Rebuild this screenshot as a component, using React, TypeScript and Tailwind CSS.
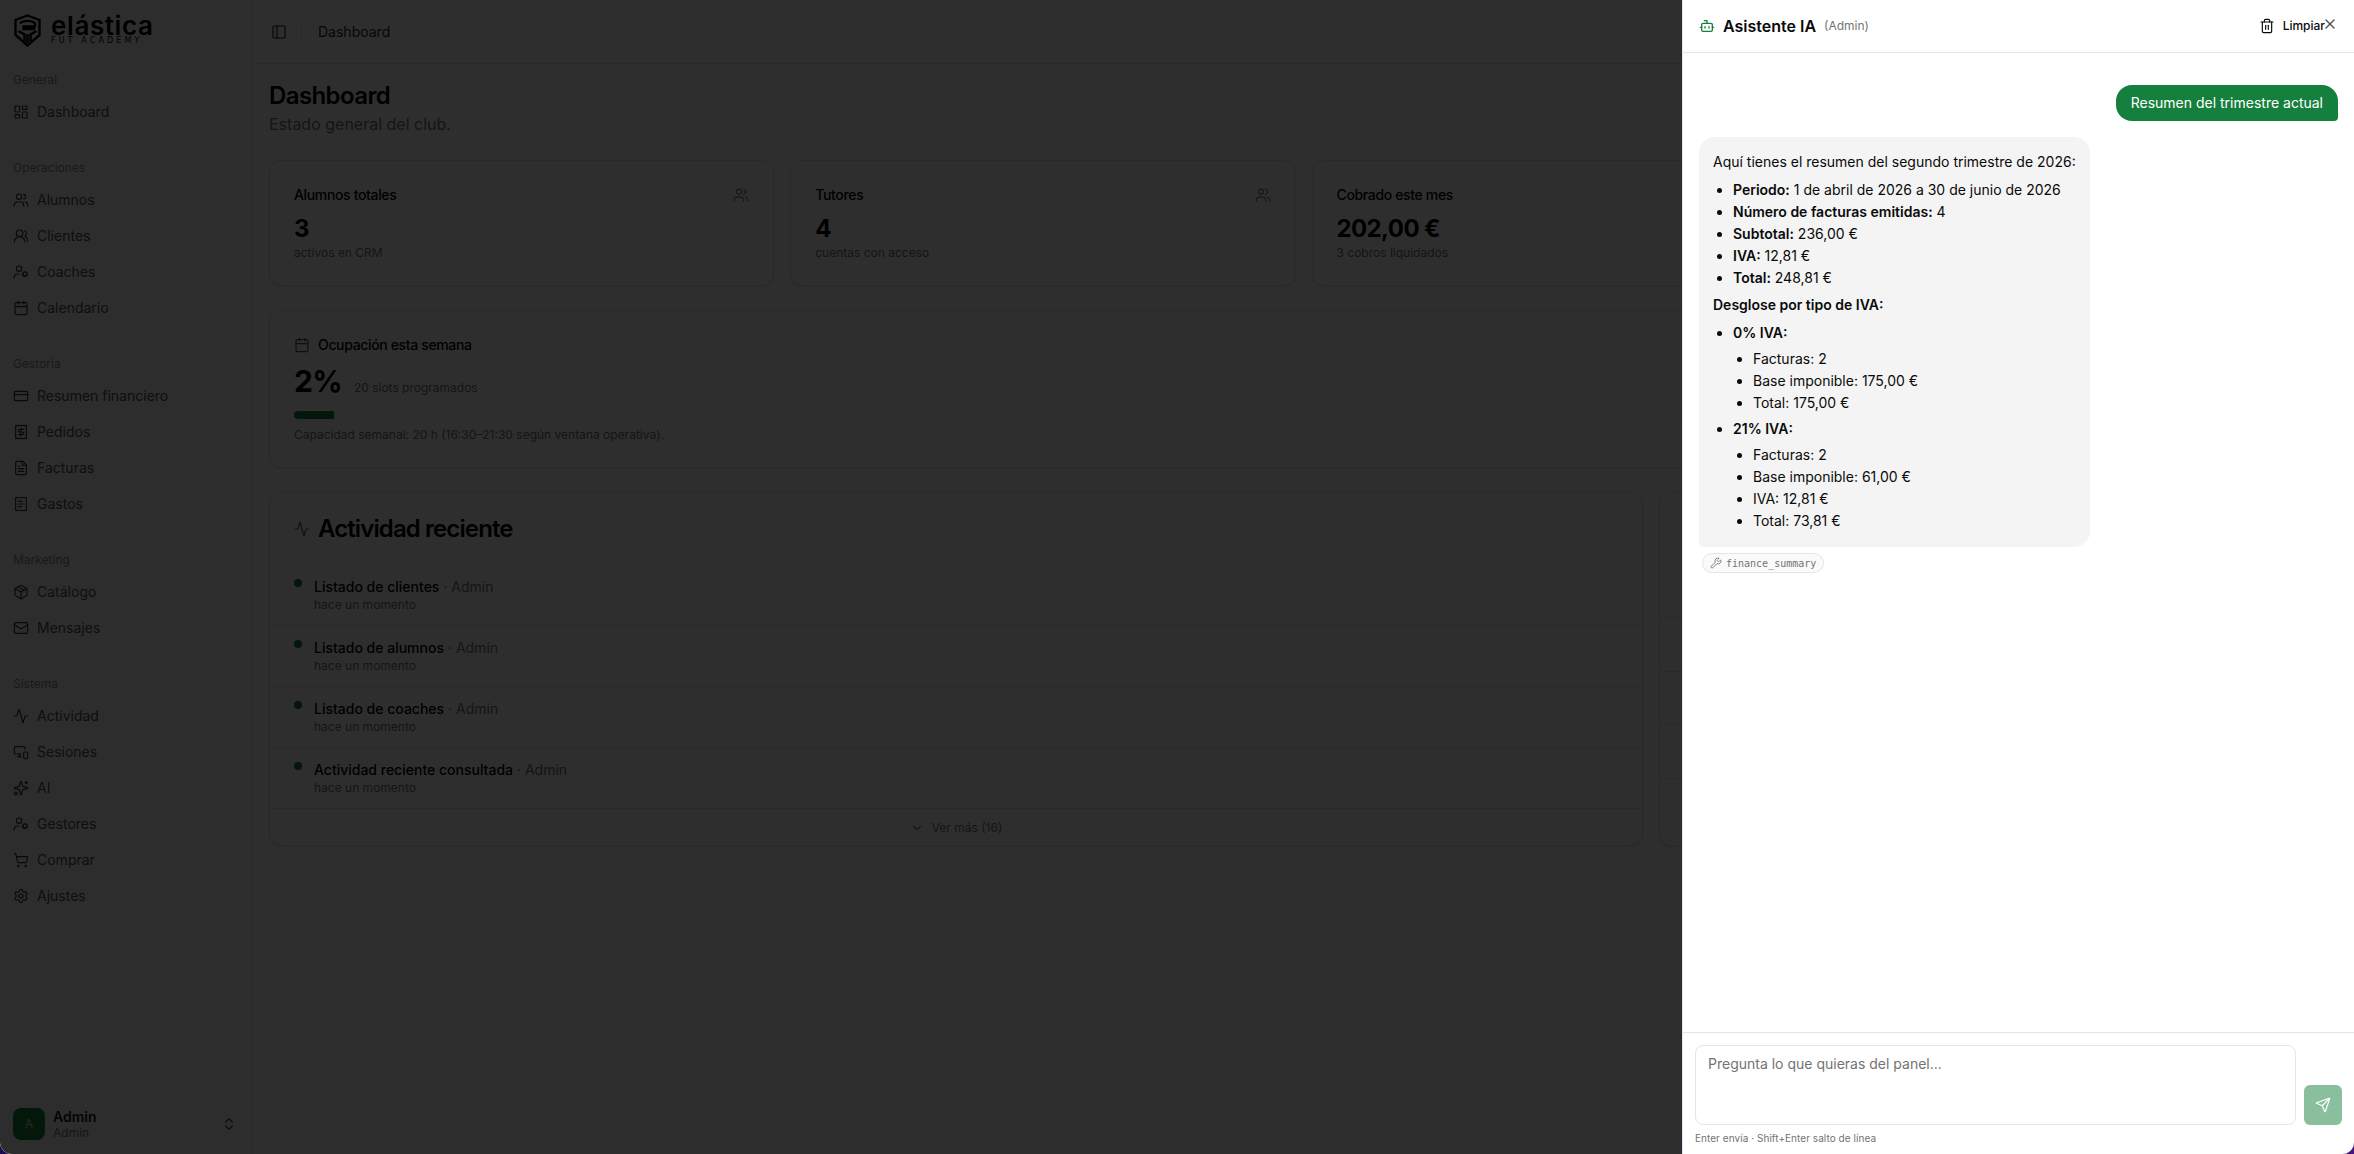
import {
  Activity,
  Bot,
  Calendar,
  ChevronDown,
  ChevronsUpDown,
  CreditCard,
  FileText,
  LayoutDashboard,
  Mail,
  MonitorSmartphone,
  Package,
  PanelLeft,
  Receipt,
  ReceiptText,
  Send,
  Settings,
  ShoppingCart,
  Sparkles,
  Trash2,
  UserCog,
  Users,
  UsersRound,
  Wrench,
  X,
} from 'lucide-react';

const navGroups = [
  { label: 'General', items: [{ name: 'Dashboard', icon: LayoutDashboard }] },
  {
    label: 'Operaciones',
    items: [
      { name: 'Alumnos', icon: Users },
      { name: 'Clientes', icon: UsersRound },
      { name: 'Coaches', icon: UserCog },
      { name: 'Calendario', icon: Calendar },
    ],
  },
  {
    label: 'Gestoría',
    items: [
      { name: 'Resumen financiero', icon: CreditCard },
      { name: 'Pedidos', icon: Receipt },
      { name: 'Facturas', icon: FileText },
      { name: 'Gastos', icon: ReceiptText },
    ],
  },
  {
    label: 'Marketing',
    items: [
      { name: 'Catálogo', icon: Package },
      { name: 'Mensajes', icon: Mail },
    ],
  },
  {
    label: 'Sistema',
    items: [
      { name: 'Actividad', icon: Activity },
      { name: 'Sesiones', icon: MonitorSmartphone },
      { name: 'AI', icon: Sparkles },
      { name: 'Gestores', icon: UserCog },
      { name: 'Comprar', icon: ShoppingCart },
      { name: 'Ajustes', icon: Settings },
    ],
  },
];

const stats = [
  { title: 'Alumnos totales', value: '3', note: 'activos en CRM', icon: true },
  { title: 'Tutores', value: '4', note: 'cuentas con acceso', icon: true },
  { title: 'Cobrado este mes', value: '202,00 €', note: '3 cobros liquidados', icon: true },
  { title: 'Pendiente', value: '', note: '', icon: false },
];

const activity = ['Listado de clientes', 'Listado de alumnos', 'Listado de coaches', 'Actividad reciente consultada'];

const Logo = () => (
  <div className="flex items-center gap-[10px]">
    <svg width="27" height="33" viewBox="0 0 27 33" fill="none" stroke="#000" strokeWidth="2.4">
      <path d="M13.5 1.5 25.5 6v15L13.5 31.5 1.5 21V6z" />
      <path d="M6 9.5c3-3.500 12-3.500 15 0v3H9.500v2.500H21" />
      <path d="M4.500 17l6 3.500v7M22.500 17l-6 3.500v7M13.500 20v9" />
    </svg>
    <div className="flex w-[102px] flex-col">
      <span className="text-[26px] leading-[22px] font-semibold tracking-[0.6px] text-black">elástica</span>
      <span className="font-['DejaVu_Sans',sans-serif] text-[8px] leading-[8px] tracking-[3.1px] whitespace-nowrap text-black">FUT ACADEMY</span>
    </div>
  </div>
);

const Sidebar = () => (
  <aside className="flex h-full w-[253px] shrink-0 flex-col border-r border-[#e5e5e5] bg-[#fafafa]">
    <div className="flex h-[66px] shrink-0 items-center px-[14px] pb-[6px]">
      <Logo />
    </div>
    <nav className="flex flex-1 flex-col gap-6 px-[13px]">
      {navGroups.map((group) => (
        <div key={group.label}>
          <div className="flex h-7 items-center text-xs text-[#8a8a8a]">{group.label}</div>
          {group.items.map((item) => (
            <div key={item.name} className="flex h-9 items-center gap-2 text-sm text-[#525252]">
              <item.icon size={16} strokeWidth={1.75} className="text-[#333333]" />
              {item.name}
            </div>
          ))}
        </div>
      ))}
    </nav>
    <div className="flex items-center gap-2 pr-4 pb-[14px] pl-[13px]">
      <div className="flex size-8 items-center justify-center rounded-lg bg-[#15803d] text-xs text-[#d4d4d4]">A</div>
      <div className="flex-1">
        <div className="text-sm leading-[18px] font-semibold text-[#171717]">Admin</div>
        <div className="text-xs leading-[14px] text-[#737373]">Admin</div>
      </div>
      <ChevronsUpDown size={16} strokeWidth={1.75} className="mr-[-1px] text-[#404040]" />
    </div>
  </aside>
);

const StatCard = ({ title, value, note, icon }: { title: string; value: string; note: string; icon: boolean }) => (
  <div className="h-[126px] rounded-xl border border-[#e5e5e5] bg-white px-6 pt-6 shadow-sm">
    <div className="mb-2 flex h-5 items-center justify-between">
      <span className="text-sm font-medium tracking-tight text-black">{title}</span>
      {icon && <Users size={16} strokeWidth={1.5} className="text-[#525252]" />}
    </div>
    <div className="text-2xl leading-8 font-bold tracking-tight text-black">{value}</div>
    <div className="text-xs text-[#737373]">{note}</div>
  </div>
);

const Occupancy = () => (
  <div className="h-[158px] rounded-xl border border-[#e5e5e5] bg-white px-6 pt-6 shadow-sm">
    <div className="flex h-5 items-center gap-2 text-sm font-medium tracking-tight text-black">
      <Calendar size={16} strokeWidth={1.75} className="text-[#525252]" />
      Ocupación esta semana
    </div>
    <div className="mt-2 flex h-9 items-baseline gap-3">
      <span className="text-3xl font-bold tracking-tight text-black">2%</span>
      <span className="text-xs text-[#737373]">20 slots programados</span>
    </div>
    <div className="mt-3 h-2 rounded-full bg-[#15803d]/5">
      <div className="h-2 w-[2%] rounded-l-full bg-[#15803d]" />
    </div>
    <div className="mt-2 text-xs text-[#737373]">Capacidad semanal: 20 h (16:30–21:30 según ventana operativa).</div>
  </div>
);

const RecentActivity = () => (
  <div className="col-span-2 h-[354px] rounded-xl border border-[#e5e5e5] bg-white pt-6 shadow-sm">
    <div className="mb-6 flex items-center gap-2 px-6 text-2xl leading-6 font-semibold tracking-[-0.9px] text-black">
      <Activity size={16} strokeWidth={1.75} className="text-[#525252]" />
      Actividad reciente
    </div>
    {activity.map((row) => (
      <div key={row} className="flex gap-3 border-b border-[#e5e5e5] px-6 py-3">
        <div className="mt-0.5 size-2 shrink-0 rounded-full bg-[#15803d]" />
        <div>
          <div className="text-sm leading-5">
            <span className="font-medium text-black">{row}</span>
            <span className="text-[#737373]"> · Admin</span>
          </div>
          <div className="text-xs text-[#737373]">hace un momento</div>
        </div>
      </div>
    ))}
    <div className="flex h-[37px] items-center justify-center gap-2 text-xs text-[#737373]">
      <ChevronDown size={14} />
      Ver más (16)
    </div>
  </div>
);

const SideCard = () => (
  <div className="h-[354px] rounded-xl border border-[#e5e5e5] bg-white pt-[124px] shadow-sm">
    {[0, 1, 2, 3].map((i) => (
      <div key={i} className="h-[53.5px] border-t border-[#e5e5e5]" />
    ))}
  </div>
);

const Main = () => (
  <main className="flex h-full min-w-0 flex-1 flex-col bg-white">
    <header className="flex h-16 shrink-0 items-center border-b border-[#e5e5e5] pl-[18px]">
      <PanelLeft size={16} strokeWidth={1.75} className="text-[#262626]" />
      <div className="mr-4 ml-[14px] h-4 w-px bg-[#e5e5e5]" />
      <span className="text-sm text-[#262626]">Dashboard</span>
    </header>
    <div className="flex flex-col gap-6 p-4">
      <div>
        <h1 className="text-2xl leading-8 font-semibold tracking-tight text-black">Dashboard</h1>
        <p className="text-base leading-6 text-[#737373]">Estado general del club.</p>
      </div>
      <div className="grid grid-cols-4 gap-4">
        {stats.map((s) => (
          <StatCard key={s.title} {...s} />
        ))}
      </div>
      <Occupancy />
      <div className="grid grid-cols-3 gap-4">
        <RecentActivity />
        <SideCard />
      </div>
    </div>
  </main>
);

const Bullet = ({ label, value }: { label: string; value: string }) => (
  <li>
    <strong className="font-semibold">{label}</strong> {value}
  </li>
);

const AssistantPanel = () => (
  <aside className="absolute inset-y-0 right-0 flex w-[672px] flex-col border-l border-[#e5e5e5] bg-white text-[#0a0a0a]">
    <div className="flex h-[53px] shrink-0 items-center border-b border-[#e5e5e5] pr-[29px] pl-[14px]">
      <Bot size={16} strokeWidth={2} className="ml-[2px] text-[#15803d]" />
      <span className="ml-2 text-base font-semibold">Asistente IA</span>
      <span className="ml-2 text-xs text-[#737373]">(Admin)</span>
      <div className="ml-auto flex items-center gap-2 text-xs font-medium">
        <Trash2 size={16} strokeWidth={1.75} />
        Limpiar
      </div>
    </div>
    <button className="absolute top-4 right-4 text-[#555555]">
      <X size={16} />
    </button>
    <div className="flex flex-1 flex-col px-4 pt-8">
      <div className="self-end rounded-2xl rounded-br-sm bg-[#15803d] px-[15px] py-2 text-sm text-white">Resumen del trimestre actual</div>
      <div className="mt-4 w-[391px] rounded-2xl rounded-bl-sm bg-[#f4f4f4] px-3.5 pt-[15px] pb-[10px] text-sm leading-5">
        <p className="mb-2">Aquí tienes el resumen del segundo trimestre de 2026:</p>
        <ul className="mb-[7px] list-disc space-y-0.5 pl-5">
          <Bullet label="Periodo:" value="1 de abril de 2026 a 30 de junio de 2026" />
          <Bullet label="Número de facturas emitidas:" value="4" />
          <Bullet label="Subtotal:" value="236,00 €" />
          <Bullet label="IVA:" value="12,81 €" />
          <Bullet label="Total:" value="248,81 €" />
        </ul>
        <p className="mb-2 font-semibold">Desglose por tipo de IVA:</p>
        <ul className="list-disc space-y-0.5 pl-5">
          <li>
            <strong className="font-semibold">0% IVA:</strong>
            <ul className="mt-1.5 mb-1.5 list-disc space-y-0.5 pl-5">
              <li>Facturas: 2</li>
              <li>Base imponible: 175,00 €</li>
              <li>Total: 175,00 €</li>
            </ul>
          </li>
          <li>
            <strong className="font-semibold">21% IVA:</strong>
            <ul className="mt-1.5 mb-1.5 list-disc space-y-0.5 pl-5">
              <li>Facturas: 2</li>
              <li>Base imponible: 61,00 €</li>
              <li>IVA: 12,81 €</li>
              <li>Total: 73,81 €</li>
            </ul>
          </li>
        </ul>
      </div>
      <div className="mt-1.5 ml-[3px] flex h-5 w-fit items-center gap-1 rounded-full border border-[#e5e5e5] bg-[#fafafa] px-[7px] text-[10px] text-[#737373]">
        <Wrench size={12} strokeWidth={1.75} />
        <span className="font-['DejaVu_Sans_Mono',monospace]">finance_summary</span>
      </div>
    </div>
    <div className="shrink-0 border-t border-[#e5e5e5] px-3 pt-3 pb-[9px]">
      <div className="flex items-end gap-2">
        <div className="h-20 flex-1 rounded-lg border border-[#e5e5e5] bg-white px-3 py-2 text-sm text-[#737373]">Pregunta lo que quieras del panel...</div>
        <div className="flex h-10 w-[38px] items-center justify-center rounded-md bg-[#8abf9e] text-white">
          <Send size={16} strokeWidth={1.75} />
        </div>
      </div>
      <div className="mt-[6px] text-[10px] leading-[14px] tracking-[0.05px] text-[#737373]">Enter envía · Shift+Enter salto de línea</div>
    </div>
  </aside>
);

const App = () => {
  return (
    <div className="h-screen overflow-hidden bg-gradient-to-r from-[#1e0a50] to-[#4a1480] font-['Inter',sans-serif]">
      <div className="relative flex h-full overflow-hidden rounded-b-xl bg-white">
        <Sidebar />
        <Main />
        <div className="absolute inset-0 bg-black/[0.82]" />
        <AssistantPanel />
      </div>
    </div>
  );
};

export default App;
